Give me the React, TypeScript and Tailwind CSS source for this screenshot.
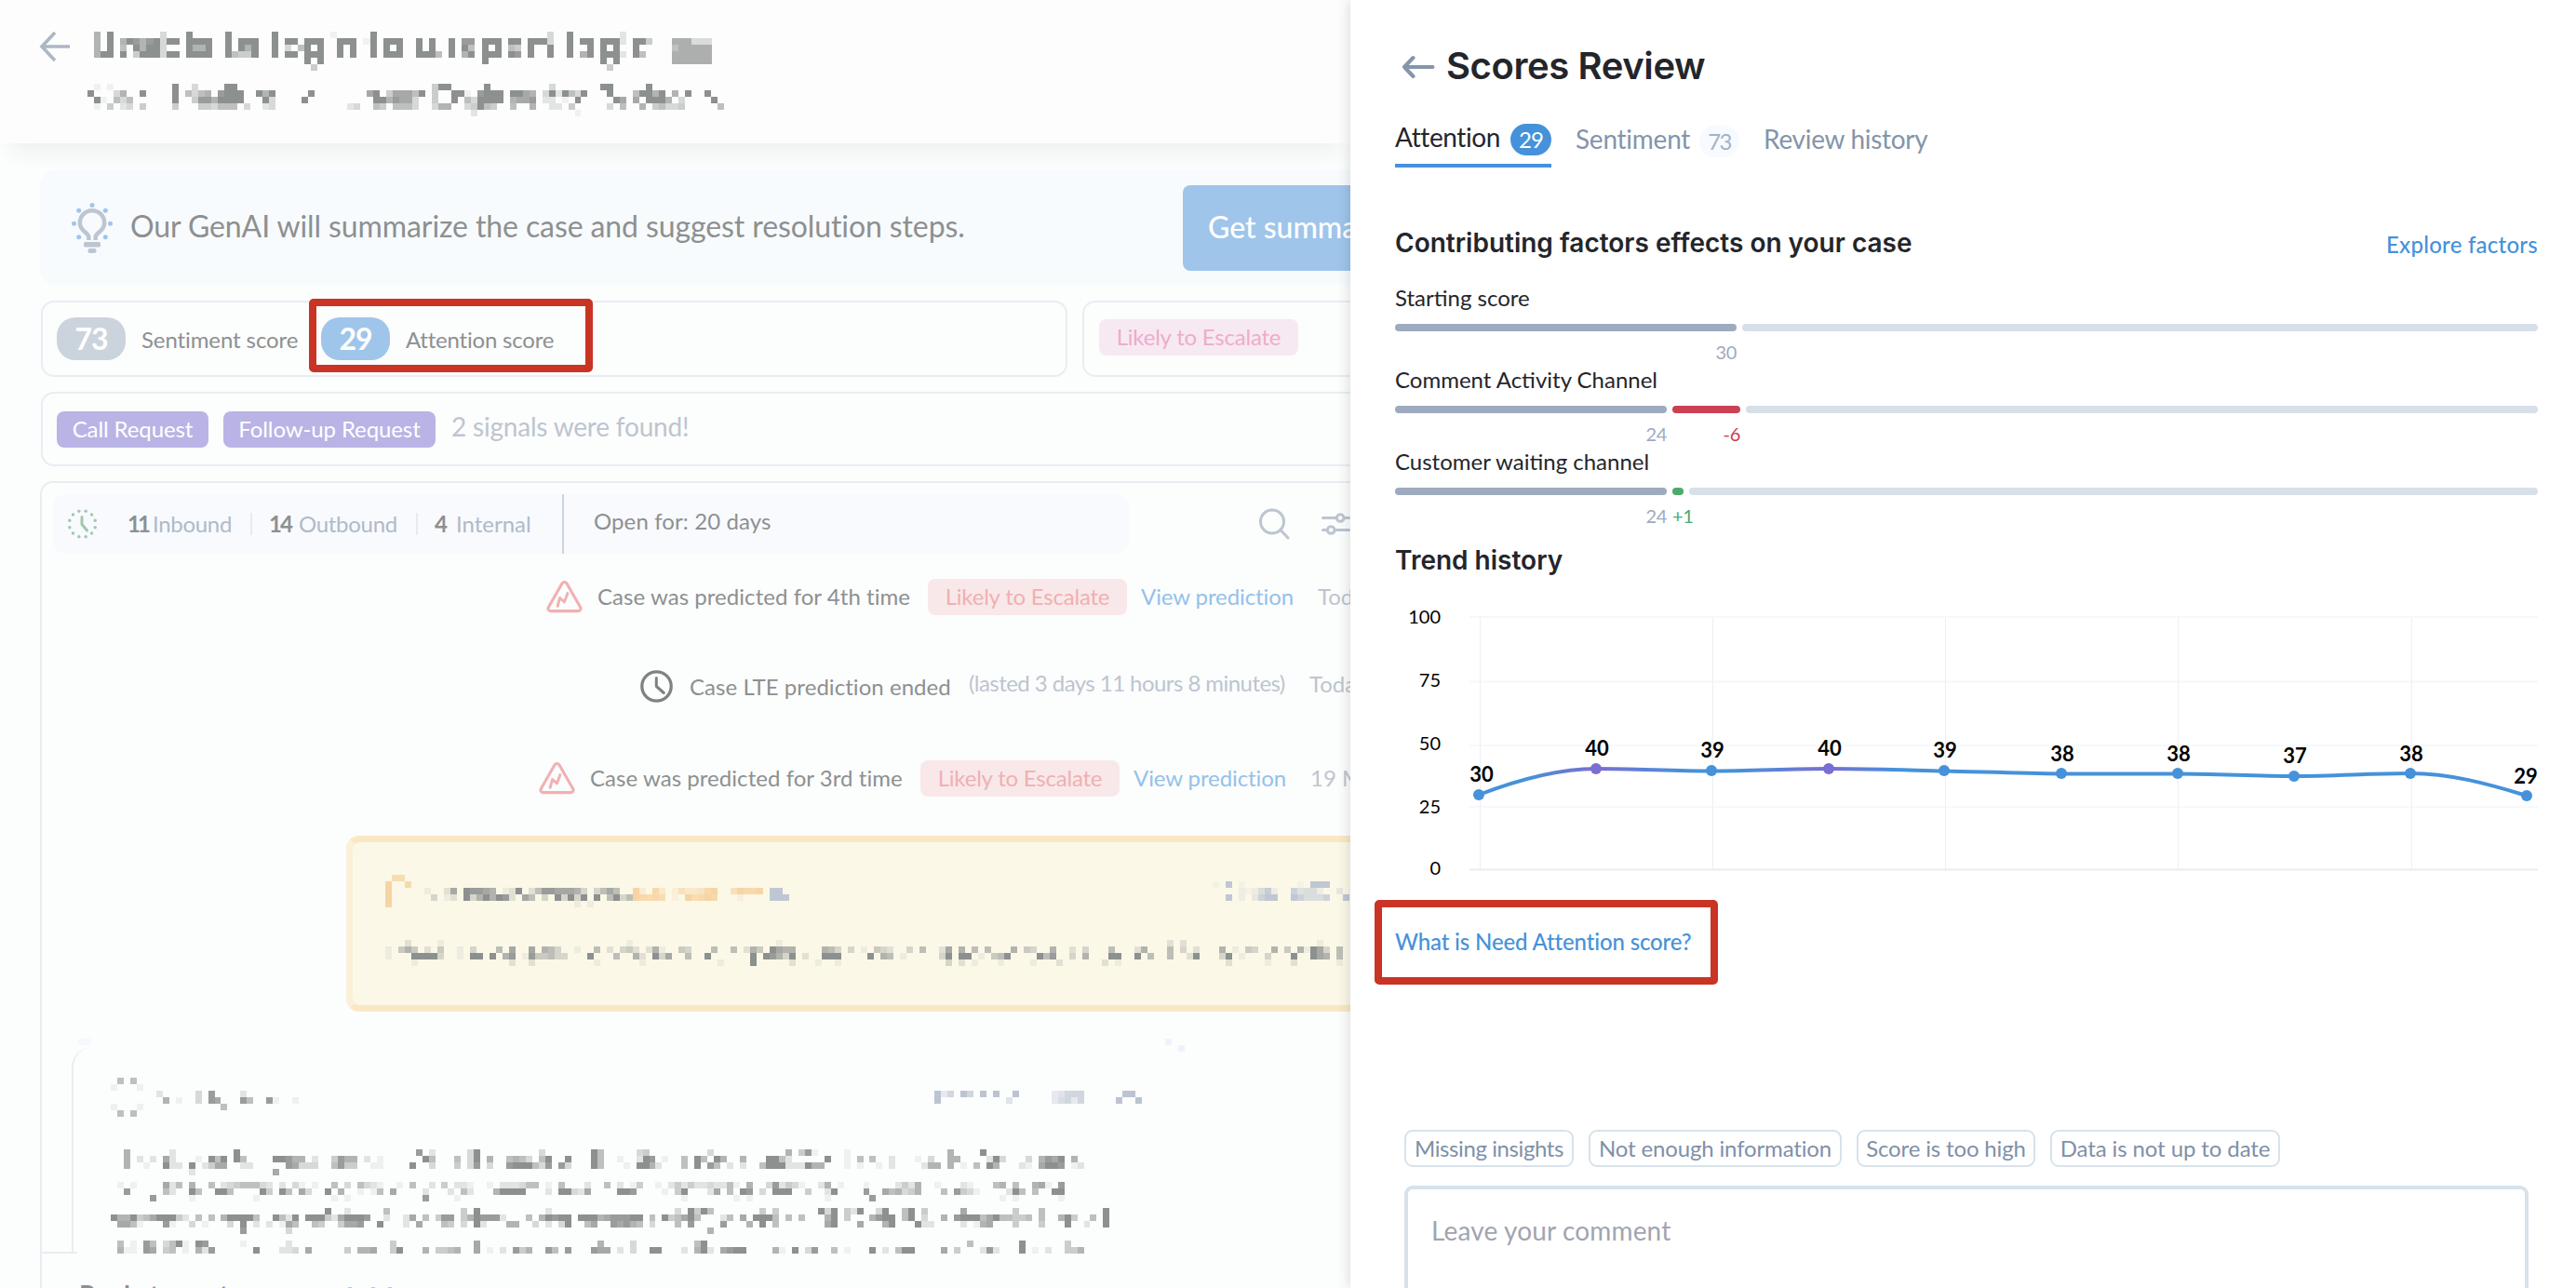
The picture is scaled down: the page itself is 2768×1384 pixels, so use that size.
import React from 'react';

interface Layer {
  color: string;
  rows: Record<number, string>;
}

interface MosaicProps {
  layers: Layer[];
  width: number;
  height: number;
  cell?: number;
  originX?: number;
  originY?: number;
  className?: string;
}

interface Segment {
  width?: number;
  color: string;
  label?: string;
  labelClass?: string;
}

const CELL = 7;
const INK = '#8c908f';

// Redacted content. Every entry is "startColumn:levels", one digit (1-9) per cell.
const titleLayers: Layer[] = [
  {
    color: INK,
    rows: {
      0: '0:6 2:9 10:3 14:9 20:9 27:9 36:1 42:9 69:3 72:9 80:2',
      1: '0:6 2:9 4:698689399 14:9 15:999 20:9 22:999 27:9 29:99 32:999 37:999 41:1 42:9 44:999 49:9 51:9 54:9 56:88 59:999 63:99 66:9993 72:9 74:99 77:999 80:2 82:994',
      2: '0:6 2:9 4:5 6:9 7:6 8:99 10:3 14:9 15:66 17:9 20:9 22:96 24:9 27:9 29:3 31:5 32:9 34:9 37:9 39:9 42:9 44:9 46:9 49:9 51:9 54:9 56:9 57:5 59:9 61:9 63:5 64:4 66:9 69:9 72:9 75:9 77:9 79:9 82:9',
      3: '0:699 4:9 6:4999 10:3 11:99 14:9 15:99 17:9 20:9 21:5449 27:9 29:99 32:999 37:9 39:9 42:9 44:999 49:999 51:9 52:5 54:9 56:69 59:999 63:98 66:9 69:9 72:9 74:69 77:999 80:2 82:95',
      4: '32:9 34:9 59:9 77:9 79:9',
      5: '33:4 78:4',
    },
  },
  {
    color: '#adafaf',
    rows: { 1: '88:999444', 2: '88:799999', 3: '88:999999', 4: '88:999999' },
  },
];

const subtitleLayers: Layer[] = [
  {
    color: INK,
    rows: {
      0: '1:1 3:1 13:9 16:3 21:99 53:4 54:99 61:9 71:3 79:99 86:9',
      1: '0:9 4:3 5:6 8:9 13:9 15:5 16:3 17:56 20:899 23:9 26:96 28:9 34:9 43:7 44:9 46:4777 50:5 51:9 53:4 56:99 58:1 60:8999 65:99 67:76 70:39 72:29 74:5 75:3 76:9 80:9 84:5 85:9 86:9 87:69 90:6 92:9 95:9',
      2: '1:9 2:1 4:5 5:3 6:5 13:9 16:4 17:88 19:6 20:999 23:9 27:9 28:3 33:9 44:99 46:6877 50:3 53:4 56:9 58:5 59:3 60:9999 65:67 67:78 70:22 73:1 75:9 81:9 82:7 84:7 86:99 88:9 89:6 91:3 96:9',
      3: '1:1 3:4 5:2 6:3 8:4 13:4 17:44 19:3 20:5 21:55 24:3 27:2 28:3 40:2 41:3 44:54 47:555 50:3 53:366 58:3 59:4 60:95 62:4 65:5 68:6 71:22 74:4 80:3 82:5 85:6 87:45 89:3 90:3 91:4 97:5',
      4: '59:2 75:1',
    },
  },
];

const noteLayers: Layer[] = [
  {
    color: INK,
    rows: {
      8: '12:1 15:2 16:7 18:9887 22:6 24:1 25:2 26:9 28:2 29:588 32:7776 36:3 38:3 39:575',
      9: '13:3 15:1 16:2 18:9 19:3 20:696 23:98 25:2 27:7 28:5 30:3 32:9 33:3 34:9 35:3 36:9 38:9 40:5 41:9 42:3 43:5',
      10: '35:1 37:1',
      16: '9:2 14:1 43:1 66:1 126:2 128:2 149:1',
      17: '6:1 8:46 10:4 12:2 14:4 17:1 19:3 23:5 25:7 28:7 30:65 32:3 35:1 38:5 40:2 42:34 44:2 46:2 47:6 48:1 51:4 52:3 56:5 59:5 61:2 62:64 65:976 68:6 73:65 75:3 77:3 79:1 81:43 83:2 86:3 88:5 91:2 92:7 94:6 96:5 98:5 102:6 104:43 108:6 111:2 113:3 117:5 121:2 122:6 126:5 128:3 130:2 134:6 136:1 138:43 142:6 144:4 146:6 147:1 148:97 150:3 152:5',
      18: '6:1 10:9999 14:3 17:1 19:99 22:9 24:6 25:8 27:1 28:844 31:5 32:33 37:9 41:5 44:6 45:2 47:93 49:7 52:5 55:9 62:9 64:9 65:86 67:3 68:9 70:2 73:999 80:9 82:65 85:1 91:3 92:9 94:99 97:1 99:4 100:59 101:9 106:95 108:8 111:3 113:6 117:99 121:9 123:5 126:5 129:25 130:9 134:3 135:9 137:1 141:3 145:9 148:97 150:6 152:5',
      19: '10:1 25:2 28:2 38:1 45:1 57:1 62:9 68:2 72:1 75:1 92:3 94:2 96:1 100:1 105:1 109:2 116:2 118:1 135:2 141:1 145:2 152:1',
    },
  },
  {
    color: '#f7d4a4',
    rows: {
      6: '7:77',
      7: '6:9 9:8',
      8: '6:9 44:93 47:84 50:2 51:644 54:58 56:9 59:69889 63:8',
      9: '6:9 44:985 46:587 50:2 52:9789 56:8 60:2',
      10: '6:9',
    },
  },
  {
    color: '#bfc7d3',
    rows: {
      7: '133:1 135:9 137:1 146:1 148:999',
      8: '65:99 137:2 138:1 139:2 140:58 142:2 145:74 147:5 148:52 152:3',
      9: '65:999 135:9 137:2 139:3 140:799 145:97 147:555 150:7 153:9',
    },
  },
];

const senderLayers: Layer[] = [
  {
    color: INK,
    rows: {
      0: '1:5 3:5',
      1: '0:1 4:1',
      2: '7:2 13:3 15:8 20:2',
      3: '8:6 10:1 13:3 15:87 20:85 24:8 25:1 28:1',
      4: '0:1 4:1 17:5',
      5: '1:5 3:5',
    },
  },
  {
    color: '#bcc4d1',
    rows: {
      2: '127:9 128:36 131:96 134:9 136:9 139:9 145:3466 149:6 156:99',
      3: '127:9 138:4 145:35 147:6 148:3 149:6 155:9 158:9',
    },
  },
];

const bodyLayers: Layer[] = [
  {
    color: INK,
    rows: {
      0: '2:6 9:2 19:9 47:8 49:2 55:3 56:9 66:3 74:9 75:5 81:34 92:3 104:6 106:48 108:1 113:1 129:6 134:9',
      1: '2:6 4:2 6:2 8:7 9:2 13:1 15:95 17:9 19:9 20:5 25:9986 29:6 31:2 34:4 35:866 39:2 41:1 48:95 53:5 55:3 56:9 58:6 61:5 62:65 64:3 66:59 70:9 74:95 78:1 81:29 83:8 85:1 88:5 90:95 93:96 97:6 101:995 104:2 110:9 113:1 115:5 117:5 120:2 124:1 126:3 129:66 135:2 136:93 141:3 143:6 144:875 146:9 148:6',
      2: '2:6 5:1 8:922 12:9 14:2 15:477 20:22 27:873 30:3 31:3 34:5 35:844 40:1 41:1 46:9 49:3 53:4 55:3 56:8 58:3 61:8999 65:53 67:8 69:83 74:95 79:1 81:99 83:62 88:5 90:9 92:85 95:2 97:2 100:5 101:999 104:2 105:2 106:2 107:966 113:1 115:1 118:1 120:2 125:2 126:66 129:6 131:1 133:5 135:96 140:2 141:1 143:79 145:9 146:8 148:12',
      3: '12:2 25:7',
      5: '1:1 3:1 8:7 9:2 10:5 12:6 15:5 17:23455 22:532 26:2 28:3 29:1 31:1 34:5 36:3 38:532 41:1 44:1 46:5 49:2 51:4 53:22 55:1 58:1 60:22 62:235 65:5 67:1 69:5 73:2 76:5 78:2 80:14 84:1 86:24 88:2 89:42 91:23 93:2 94:25 96:1 98:6 101:38 103:2 104:43 106:1 109:2 110:6 112:1 116:1 121:2 122:4 123:26 127:1 131:2 132:1 136:56 139:5 142:67 144:1 146:8',
      6: '2:8 8:5 9:2 12:95 16:995 23:94 26:95 29:73 33:9 35:6 38:1 40:1 41:5 43:7 48:2 52:2 54:5 55:2 59:69999 67:2 69:993 72:2 73:7 78:998 85:1 87:49 92:27 95:5 97:98 100:3 102:999 107:4 110:2 111:9 116:8 119:756 122:3 123:46 128:5 130:84 132:31 138:2 139:95 142:5 145:99',
      7: '6:8 12:1 22:1 34:1 36:1 48:8 53:1 88:1 96:1 98:1 110:1 117:8 137:1 139:1 146:1',
      9: '33:9 36:2 42:5 54:4 56:9 67:2 87:3 89:9 90:495 100:4 102:4 109:93 111:9 113:4 114:2 115:9 118:39 119:8 122:59 125:4 131:7 139:4 143:5 153:9',
      10: '0:96694 5:5 6:7999 10:4 11:2 13:5 15:5 17:69999 22:5 25:952 28:9 30:999 33:4 34:2 35:79 36:9998 42:2 45:2 46:7 48:5 50:488 54:4 55:69 57:888 60:2 64:5 66:69 67:389 70:9 72:999 75:67888 80:99 83:5 85:94 87:579 90:5 94:2 95:5 97:7 99:999 102:5 104:5 106:5 110:69 113:4 117:6 118:89 120:9 122:5 123:9 125:3 128:6 130:8999 134:5 135:79 137:5 138:5 139:445 143:5 146:69 148:4 151:5 153:9',
      11: '1:77 3:5 4:1 8:8 9:1 12:3 14:1 18:3 20:9 22:2 24:2 26:1 27:75 31:54 35:477 38:8 41:9 45:2 47:7 51:54 54:3 56:9 57:2 61:66 65:3 67:2 69:3 70:9 73:57 77:8786 81:5 83:3 87:5 89:8 94:8 98:6 100:9 102:5 110:79 115:7 119:6 120:9 124:9 125:2 126:2 131:2 133:1 134:67 139:4 143:4 147:9 150:2 153:9',
      12: '20:8 27:3 92:6',
      14: '1:5 3:1 5:85 8:359 11:1 13:98 20:1 27:2 43:4 56:7 75:6 80:3 90:59 132:5 140:9 147:4',
      15: '1:6 2:1 3:1 5:87 8:4 9:5 11:1 13:62 15:8 22:9 26:223 30:7 36:4 38:667 43:49 48:6 50:4456 56:7 58:1 60:2 62:84 64:6 67:85 70:8 74:877 78:2 80:3 83:99 88:2 90:692 94:7899 102:6 103:1 105:9 107:38 111:5 113:1 117:9 119:2 121:59 123:9 128:7 130:4 134:28 136:2 140:9 142:1 144:2 147:446',
    },
  },
];

const Mosaic: React.FC<MosaicProps> = ({
  layers,
  width,
  height,
  cell = CELL,
  originX = 0,
  originY = 0,
  className = '',
}) => (
  <svg
    width={width}
    height={height}
    viewBox={`${originX} ${originY} ${width} ${height}`}
    shapeRendering="crispEdges"
    className={`block shrink-0 ${className}`}
  >
    {layers.map((layer, l) =>
      Object.entries(layer.rows).map(([row, runs]) =>
        runs.split(' ').map(run => {
          const [start, levels] = run.split(':');
          return levels.split('').map((level, i) => (
            <rect
              key={`${l}-${row}-${start}-${i}`}
              x={(Number(start) + i) * cell}
              y={Number(row) * CELL}
              width={cell}
              height={CELL}
              fill={layer.color}
              fillOpacity={Number(level) / 9}
            />
          ));
        })
      )
    )}
  </svg>
);

const BulbIcon = () => (
  <svg width="44" height="54" viewBox="0 0 44 54" fill="none" className="block shrink-0">
    <g fill="#9fc5ea">
      <circle cx="22" cy="2.6" r="2.5" />
      <circle cx="7.7" cy="8.3" r="2.5" />
      <circle cx="36.3" cy="8.3" r="2.5" />
      <circle cx="2.5" cy="22.3" r="2.5" />
      <circle cx="41.5" cy="22.3" r="2.5" />
      <circle cx="7.7" cy="36.7" r="2.5" />
      <circle cx="36.3" cy="36.7" r="2.5" />
    </g>
    <path
      d="M18.3 40v-3.5C18.3 32 8.8 30.5 8.8 21.5a13.2 13.2 0 0 1 26.4 0C35.2 30.5 25.7 32 25.7 36.5V40"
      stroke="#bcc6d2"
      strokeWidth="4.5"
    />
    <rect x="13" y="42" width="18" height="5.5" rx="1.5" fill="#bcc6d2" />
    <rect x="17.5" y="49" width="9" height="5" rx="2" fill="#bcc6d2" />
  </svg>
);

const DottedClockIcon = () => (
  <svg width="31" height="32" viewBox="0 0 31 32" fill="none" className="block shrink-0">
    {Array.from({ length: 12 }, (_, i) => {
      const a = ((i * 30 + 15) * Math.PI) / 180;
      return <circle key={i} cx={15.5 + 14.2 * Math.cos(a)} cy={16 + 14.2 * Math.sin(a)} r="1.7" fill="#9fc9ac" />;
    })}
    <path d="M15 8.5v8l5.5 6.5" stroke="#9fc9ac" strokeWidth="3" strokeLinecap="round" strokeLinejoin="round" />
  </svg>
);

const EscalateIcon = () => (
  <svg width="39" height="36" viewBox="0 0 40 36" fill="none" className="block shrink-0">
    <path
      d="M17.4 3.6a3 3 0 0 1 5.2 0l15 26.2a2.8 2.8 0 0 1-2.4 4.200H4.800a2.800 2.800 0 0 1-2.400-4.200z"
      stroke="#f2b0b2"
      strokeWidth="3.2"
    />
    <path d="M12.5 28.5l2.500-9 5 4.500 3.500-9.500" stroke="#f2b0b2" strokeWidth="3" strokeLinecap="round" strokeLinejoin="round" />
  </svg>
);

const ClockIcon = () => (
  <svg width="35" height="35" viewBox="0 0 35 35" fill="none" className="block">
    <circle cx="17.5" cy="17.5" r="15.7" stroke="#7f8282" strokeWidth="3.3" />
    <path d="M17.3 8.500v9l8 7" stroke="#7f8282" strokeWidth="3" strokeLinecap="round" strokeLinejoin="round" />
  </svg>
);

const SearchIcon = () => (
  <svg width="33" height="34" viewBox="0 0 33 34" fill="none" className="block shrink-0">
    <circle cx="14" cy="14.5" r="12.5" stroke="#bcc5d0" strokeWidth="3" />
    <path d="M23 23.5l8 8.5" stroke="#bcc5d0" strokeWidth="3" strokeLinecap="round" />
  </svg>
);

const SlidersIcon = () => (
  <svg width="32" height="24" viewBox="0 0 32 24" fill="none" className="block shrink-0">
    <g stroke="#bcc5d0" strokeWidth="3" strokeLinecap="round">
      <path d="M1.5 5.5H16M24.5 5.5h5" />
      <path d="M1.5 18.5H6M14.5 18.5h15" />
      <circle cx="20.2" cy="5.5" r="3.8" />
      <circle cx="10.2" cy="18.5" r="3.8" />
    </g>
  </svg>
);

const EscalateEvent = ({ text, date, offset }: { text: string; date: string; offset: string }) => (
  <div className={`flex h-10 items-center whitespace-nowrap *:shrink-0 ${offset}`}>
    <EscalateIcon />
    <span className="ml-4 w-[338px] tracking-[0.05px] text-[#8d9090]">{text}</span>
    <span className="ml-[17px] flex h-[39px] w-[214px] items-center justify-center rounded-lg bg-[#f9e8e9] tracking-[-0.2px] text-[#efb0b2]">
      Likely to Escalate
    </span>
    <span className="ml-[15px] w-[166px] tracking-[-0.1px] text-[#94c1ea]">View prediction</span>
    <span className="ml-6 text-[#bcc5d0]">{date}</span>
  </div>
);

const CaseView = () => (
  <main className="flex h-full w-[1451px] shrink-0 flex-col overflow-hidden bg-[#fcfdfd] font-[Lato,sans-serif] text-2xl text-[#8d9090]">
    <header className="relative z-10 flex h-[154px] shrink-0 bg-[#fdfdfd] pt-[34px] pl-[42px] shadow-[0_20px_22px_-12px_rgba(40,60,60,0.07)]">
      <svg width="33" height="32" viewBox="0 0 33 32" fill="none" className="block">
        <path d="M17 1L3 16l14 15M3 16h30" stroke="#adb6c5" strokeWidth="3.6" />
      </svg>
      <div className="ml-[19px]">
        <Mosaic layers={titleLayers} width={700} height={42} cell={7.06} className="ml-[7px]" />
        <Mosaic layers={subtitleLayers} width={700} height={35} cell={6.98} className="mt-3.5" />
      </div>
    </header>

    {/* GenAI banner */}
    <div className="mt-[29px] ml-[43px] flex h-[123px] w-[1500px] shrink-0 items-center rounded-2xl bg-[#f8fbfd] pl-[34px] whitespace-nowrap *:shrink-0">
      <BulbIcon />
      <p className="mb-0.5 ml-[19px] w-[1131px] text-[32px] tracking-[-0.1px]">
        Our GenAI will summarize the case and suggest resolution steps.
      </p>
      <div className="flex h-[92px] w-[240px] items-center rounded-lg bg-[#9fc5ea] pl-[27px] text-[32px] font-medium text-white">
        Get summary
      </div>
    </div>

    {/* Scores */}
    <div className="mt-[17px] ml-11 flex h-[82px] w-[1500px] shrink-0 gap-4 whitespace-nowrap">
      <div className="relative flex w-[1103px] items-center rounded-[14px] border-2 border-[#e7eef3] pl-[15px] *:shrink-0">
        <span className="flex h-[46px] w-[74px] items-center justify-center rounded-[20px] bg-[#cbd4dd] text-[32px] font-bold tracking-[-1px] text-white">
          73
        </span>
        <span className="mt-0.5 ml-[17px] w-[193px] tracking-[-0.1px]">Sentiment score</span>
        <span className="flex h-[46px] w-[74px] items-center justify-center rounded-[20px] bg-[#9fc5ea] text-[32px] font-bold tracking-[-1px] text-white">
          29
        </span>
        <span className="mt-0.5 ml-[17px] tracking-[-0.2px]">Attention score</span>
        {/* Callout frame */}
        <div className="absolute -top-1 left-[286px] h-[79px] w-[305px] rounded-[5px] border-8 border-[#c93424]" />
      </div>
      <div className="flex flex-1 items-center rounded-[14px] border-2 border-[#e7eef3] pl-4">
        <span className="mb-1 flex h-[39px] w-[214px] items-center justify-center rounded-lg bg-[#f7e9f2] tracking-[-0.2px] text-[#eeaccb]">
          Likely to Escalate
        </span>
      </div>
    </div>

    {/* Signals */}
    <div className="mt-4 ml-11 flex h-20 w-[1500px] shrink-0 items-center rounded-[14px] border-2 border-[#e7eef3] pl-[15px] whitespace-nowrap">
      <span className="flex h-[39px] w-[163px] items-center justify-center rounded-lg bg-[#b9b4e5] tracking-[-0.1px] text-white">
        Call Request
      </span>
      <span className="ml-4 flex h-[39px] w-[228px] items-center justify-center rounded-lg bg-[#b9b4e5] tracking-[-0.1px] text-white">
        Follow-up Request
      </span>
      <span className="mb-1 ml-[17px] text-[28px] tracking-[-0.2px] text-[#bcc5d0]">2 signals were found!</span>
    </div>

    {/* Conversation */}
    <div className="mt-4 ml-[43px] w-[1500px] shrink-0 rounded-t-[14px] border-2 border-b-0 border-[#e7eef3] pt-3 whitespace-nowrap">
      <div className="ml-3 flex items-center">
        <div className="flex h-16 w-[1156px] items-center rounded-[14px] bg-[#f8fafe] pl-4 text-[#b0bac6] *:shrink-0">
          <DottedClockIcon />
          <span className="ml-[33px] w-[27px] font-bold tracking-[-3px] text-[#8d9090]">11</span>
          <span className="w-[85px] tracking-[-0.3px]">Inbound</span>
          <span className="ml-5 h-6 w-0.5 bg-[#e6ebf0]" />
          <span className="ml-[18px] w-8 font-bold tracking-[-2px] text-[#8d9090]">14</span>
          <span className="w-[106px] tracking-[-0.3px]">Outbound</span>
          <span className="ml-5 h-6 w-0.5 bg-[#e6ebf0]" />
          <span className="ml-[18px] w-[23px] font-bold text-[#8d9090]">4</span>
          <span className="w-[81px]">Internal</span>
          <span className="ml-[33px] h-16 w-0.5 bg-[#cbd4de]" />
          <span className="mb-1.5 ml-8 tracking-[0.1px] text-[#8d9090]">Open for: 20 days</span>
        </div>
        <div className="ml-[140px] flex items-center gap-[34px]">
          <SearchIcon />
          <SlidersIcon />
        </div>
      </div>

      <div className="mt-[26px]">
        <EscalateEvent text="Case was predicted for 4th time" date="Today, 10:21" offset="ml-[542px]" />
        <div className="mt-[56px] ml-[643px] flex h-10 items-center *:shrink-0">
          <ClockIcon />
          <span className="mt-0.5 ml-[18px] w-[283px] tracking-[0.05px]">Case LTE prediction ended</span>
          <span className="mb-1.5 ml-[17px] w-[342px] tracking-[-0.55px] text-[#bcc5d0]">
            (lasted 3 days 11 hours 8 minutes)
          </span>
          <span className="mb-1 ml-6 text-[#bcc5d0]">Today, 10:21</span>
        </div>
        <div className="mt-[59px]">
          <EscalateEvent text="Case was predicted for 3rd time" date="19 Mar 2024" offset="ml-[534px]" />
        </div>
      </div>

      {/* Internal note */}
      <div className="mt-[42px] ml-[327px] h-[189px] rounded-l-[14px] border-y-[7px] border-l-[7px] border-y-[#fae8c4] border-l-[#fbf0d8] bg-[#fbf8e8]">
        <Mosaic layers={noteLayers} width={1120} height={175} originX={7} originY={7} />
      </div>

      {/* Message */}
      <div className="mt-[29px] ml-8 h-[229px] w-[1196px]">
        <div className="flex justify-between pl-[7px]">
          <span className="h-[7px] w-3.5 bg-[#f6f8fc]" />
          <Mosaic
            layers={[{ color: '#eff3f9', rows: { 0: '0:9', 1: '2:9' } }]}
            width={21}
            height={14}
            className="-mb-3.5"
          />
        </div>
        <div className="mt-0.5 h-[220px] rounded-tl-[22px] border-l-2 border-[#e7eef3] pt-[33px] pl-10">
          <Mosaic layers={senderLayers} width={1130} height={42} cell={6.97} />
          <Mosaic layers={bodyLayers} width={1130} height={112} cell={6.97} className="mt-[35px]" />
        </div>
      </div>

      {/* Composer */}
      <div className="h-0.5 w-[38px] bg-[#e7eef3]" />
      <div className="mt-[28px] ml-10 flex h-10 text-[28px] leading-8 font-bold">
        <span className="w-[289px]">Reply to customer</span>
        <span className="mt-2 h-1 w-1 bg-[#bcc5d0]" />
        <span className="mt-2 ml-[21px] h-1 w-1 bg-[#bcc5d0]" />
        <span className="mt-2 ml-[14px] h-1 w-1 bg-[#bcc5d0]" />
      </div>
    </div>
  </main>
);

const factors: { name: string; segments: Segment[] }[] = [
  {
    name: 'Starting score',
    segments: [
      { width: 367, color: 'bg-[#9eabbf]', label: '30', labelClass: 'text-right text-[#9eabbf]' },
      { color: 'bg-[#d7e0e9]' },
    ],
  },
  {
    name: 'Comment Activity Channel',
    segments: [
      { width: 292, color: 'bg-[#9eabbf]', label: '24', labelClass: 'text-right text-[#9eabbf]' },
      { width: 73, color: 'bg-[#c94152]', label: '-6', labelClass: 'text-right text-[#c94152]' },
      { color: 'bg-[#d7e0e9]' },
    ],
  },
  {
    name: 'Customer waiting channel',
    segments: [
      { width: 292, color: 'bg-[#9eabbf]', label: '24', labelClass: 'text-right text-[#9eabbf]' },
      { width: 12, color: 'bg-[#4caa6b]', label: '+1', labelClass: 'text-left text-[#4caa6b]' },
      { color: 'bg-[#d7e0e9]' },
    ],
  },
];

const FactorBar = ({ segments }: { segments: Segment[] }) => (
  <div className="mt-3 flex h-11 gap-1.5">
    {segments.map((s, i) => (
      <div key={i} className={s.width ? 'shrink-0' : 'flex-1'} style={{ width: s.width }}>
        <div className={`h-2 rounded ${s.color}`} />
        {s.label && <div className={`mt-2.5 text-xl leading-6 tracking-[-0.3px] ${s.labelClass}`}>{s.label}</div>}
      </div>
    ))}
  </div>
);

const BLUE = '#4592da';
const PURPLE = '#7a6fd0';

// x, y, value, label x, label baseline (relative to the chart's top left corner)
const points = [
  { x: 90, y: 214, value: 30, lx: 93, ly: 200 },
  { x: 216, y: 186, value: 40, lx: 217, ly: 172 },
  { x: 340, y: 188, value: 39, lx: 341, ly: 174 },
  { x: 466, y: 186, value: 40, lx: 467, ly: 172 },
  { x: 590, y: 188, value: 39, lx: 591, ly: 174 },
  { x: 716, y: 191, value: 38, lx: 717, ly: 178 },
  { x: 841, y: 191, value: 38, lx: 842, ly: 178 },
  { x: 966, y: 194, value: 37, lx: 967, ly: 180 },
  { x: 1091, y: 191, value: 38, lx: 1092, ly: 178 },
  { x: 1216, y: 215, value: 29, lx: 1215, ly: 202 },
];

const gridLines = [
  { label: '100', y: 23, ly: 30 },
  { label: '75', y: 92.5, ly: 98 },
  { label: '50', y: 161, ly: 166 },
  { label: '25', y: 227, ly: 234 },
  { label: '0', y: 294.5, ly: 300 },
];

const TrendChart = () => {
  const d =
    'M90 214C132 198 174 186 216 186C258 186 299 188.5 340 188.5C382 188.5 424 186 466 186C508 186 549 187.5 590 188.5' +
    'C632 189.5 674 191 716 191.5L841 191.5C883 191.5 925 194 966 194C1008 194 1050 191 1091 191C1133 191 1174 202 1216 215';

  return (
    <svg width="1228" height="310" viewBox="0 0 1228 310" fill="none" className="mt-5 block font-[Lato,sans-serif]">
      <defs>
        <linearGradient id="trend" gradientUnits="userSpaceOnUse" x1="90" y1="0" x2="590" y2="0">
          <stop offset="0" stopColor={BLUE} />
          <stop offset="0.1" stopColor={BLUE} />
          <stop offset="0.25" stopColor={PURPLE} />
          <stop offset="0.45" stopColor={BLUE} />
          <stop offset="0.55" stopColor={BLUE} />
          <stop offset="0.75" stopColor={PURPLE} />
          <stop offset="0.9" stopColor={BLUE} />
        </linearGradient>
      </defs>
      {gridLines.map(g => (
        <g key={g.label}>
          <path d={`M80 ${g.y}H1228`} stroke={g.label === '0' ? '#ececee' : '#f6f8fb'} strokeWidth="2" />
          <text x="49" y={g.ly} textAnchor="end" fontSize="20" fill="#000">
            {g.label}
          </text>
        </g>
      ))}
      {[91.5, 341.5, 591.5, 841.5, 1092.5].map(x => (
        <path key={x} d={`M${x} 23V294`} stroke="#efeff0" />
      ))}
      <path d={d} stroke="url(#trend)" strokeWidth="4" />
      {points.map(p => (
        <g key={p.x}>
          <circle cx={p.x} cy={p.y} r="6" fill={p.value === 40 ? PURPLE : BLUE} />
          <text x={p.lx} y={p.ly} textAnchor="middle" fontSize="22" fontWeight="700" fill="#000">
            {p.value}
          </text>
        </g>
      ))}
    </svg>
  );
};

const feedbackOptions = [
  { text: 'Missing insights', style: 'w-[182px] tracking-[-0.4px]' },
  { text: 'Not enough information', style: 'w-[272px] tracking-[-0.15px]' },
  { text: 'Score is too high', style: 'w-[192px] tracking-[-0.15px]' },
  { text: 'Data is not up to date', style: 'w-[247px] tracking-[-0.1px]' },
];

const ScoresPanel = () => (
  <aside className="relative z-20 flex h-full flex-1 flex-col bg-white pt-10 pr-[41px] pl-12 font-[Lato,sans-serif] text-2xl whitespace-nowrap text-[#24252b] shadow-[0_0_14px_rgba(0,0,0,0.16)] *:shrink-0">
    <div className="flex h-[61px] items-center pl-[7px]">
      <svg width="36" height="26" viewBox="0 0 36 26" fill="none" className="mt-0.5 block">
        <path d="M12.5 3L3 13l9.5 10M3 13h30.5" stroke="#8595ab" strokeWidth="4" strokeLinecap="round" strokeLinejoin="round" />
      </svg>
      <h1 className="ml-3 font-[Inter,sans-serif] text-[40px] font-semibold tracking-[-0.4px]">Scores Review</h1>
    </div>

    {/* Tabs */}
    <div className="mt-8 flex h-[47px] text-[28px] leading-none text-[#8494aa]">
      <div className="flex w-[168px] justify-between border-b-4 border-[#4592da] text-[#24252b]">
        <span className="tracking-[-0.4px]">Attention</span>
        <span className="flex h-[34px] w-11 items-center justify-center rounded-[17px] bg-[#4592da] text-2xl tracking-[-1px] text-white">
          29
        </span>
      </div>
      <span className="mt-0.5 ml-[26px] tracking-[-0.25px]">Sentiment</span>
      <span className="mt-0.5 ml-2.5 flex h-[34px] w-[43px] items-center justify-center rounded-[17px] bg-[#f7fafe] text-2xl tracking-[-1.5px] text-[#a5b2c5]">
        73
      </span>
      <span className="mt-0.5 ml-[26px] tracking-[-0.3px]">Review history</span>
    </div>

    {/* Contributing factors */}
    <div className="mt-[62px] flex h-10 items-center justify-between">
      <h2 className="font-[Inter,sans-serif] text-[28px] font-semibold">Contributing factors effects on your case</h2>
      <span className="mt-0.5 font-medium tracking-[0.25px] text-[#4592da]">Explore factors</span>
    </div>
    <div className="mt-[22px]">
      {factors.map(f => (
        <div key={f.name} className="h-[88px]">
          <div className="leading-8">{f.name}</div>
          <FactorBar segments={f.segments} />
        </div>
      ))}
    </div>

    {/* Trend history */}
    <h2 className="mt-4 font-[Inter,sans-serif] text-[28px] leading-9 font-semibold">Trend history</h2>
    <TrendChart />

    <div className="relative mt-[46px] h-8">
      <span className="block leading-8 font-medium tracking-[-0.14px] text-[#4592da]">What is Need Attention score?</span>
      {/* Callout frame */}
      <div className="absolute -top-[29px] -left-[22px] h-[91px] w-[369px] rounded-[5px] border-8 border-[#c93424]" />
    </div>

    {/* Feedback */}
    <div className="mt-[186px] ml-2.5 flex gap-4 text-[#7f90a8]">
      {feedbackOptions.map(o => (
        <span key={o.text} className={`flex h-10 shrink-0 items-center justify-center rounded-[9px] border-2 border-[#d7e2eb] ${o.style}`}>
          {o.text}
        </span>
      ))}
    </div>
    <div className="mx-2.5 mt-5 h-[140px] rounded-[9px] border-4 border-[#d7e2eb] pt-6 pl-[25px] text-[28px] leading-10 tracking-[0.15px] text-[#a0a5b1]">
      Leave your comment
    </div>
  </aside>
);

const App: React.FC = () => (
  <div className="flex h-[1384px] w-[2768px] overflow-hidden bg-white">
    <CaseView />
    <ScoresPanel />
  </div>
);

export default App;
